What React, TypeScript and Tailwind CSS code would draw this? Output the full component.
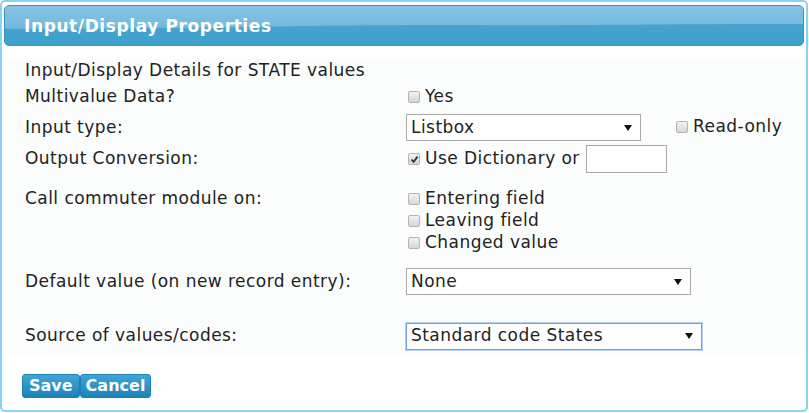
import React from "react";

const font = { fontFamily: '"DejaVu Sans", Verdana, sans-serif' };

function Box({ checked = false }: { checked?: boolean }) {
  return (
    <span className="inline-flex items-center justify-center w-[12px] h-[12px] mr-[5px] rounded-[2px] border border-[#b4b4b4] bg-gradient-to-b from-[#f2f2f2] to-[#d6d6d6] shrink-0">
      {checked && (
        <svg width="9" height="9" viewBox="0 0 9 9">
          <path d="M1.5 4.5 L3.6 6.8 L7.6 1.6" fill="none" stroke="#333" strokeWidth="1.8" />
        </svg>
      )}
    </span>
  );
}

function Check({ label, checked = false }: { label: string; checked?: boolean }) {
  return (
    <div className="flex items-center h-[22px] pl-[2px]">
      <Box checked={checked} />
      <span>{label}</span>
    </div>
  );
}

function Select({ value, w, focus = false }: { value: string; w: string; focus?: boolean }) {
  return (
    <div
      className={`flex items-center justify-between h-[27px] bg-white pl-[4px] pr-[8px] ${w} ${
        focus ? "border border-[#6f9fe6] shadow-[0_0_0_1px_#b6cff5]" : "border border-[#a9a9a9]"
      }`}
    >
      <span>{value}</span>
      <svg width="8" height="6" viewBox="0 0 8 6">
        <path d="M0 0 H8 L4 6 Z" fill="#111" />
      </svg>
    </div>
  );
}

export default function App() {
  return (
    <div className="w-[809px] h-[413px] bg-white" style={font}>
      <div className="w-[808px] h-[412px] border-2 border-[#86d5f6] rounded-[5px] flex flex-col px-[2px] pt-[3px]">
        <div className="relative h-[41px] rounded-[5px] border border-[#3b8fc1] overflow-hidden bg-[#44a3cd]">
          <svg className="absolute inset-0" width="100%" height="100%" viewBox="0 0 800 41" preserveAspectRatio="none">
            <defs>
              <linearGradient id="tp" x1="0" y1="0" x2="0" y2="1">
                <stop offset="0" stopColor="#86c4e2" />
                <stop offset="1" stopColor="#72b8dc" />
              </linearGradient>
              <linearGradient id="bt" x1="0" y1="0" x2="0" y2="1">
                <stop offset="0" stopColor="#4eaad3" />
                <stop offset="1" stopColor="#3c9fcb" />
              </linearGradient>
            </defs>
            <rect x="0" y="0" width="800" height="41" fill="url(#bt)" />
            <path d="M0 0 H800 V19 C650 19 560 21 470 20 C330 19 200 24 0 24 Z" fill="url(#tp)" />
          </svg>
          <div className="relative h-full flex items-center pl-[19px] pt-[3px] text-white font-bold text-[17px] tracking-[0.6px]">
            Input/Display Properties
          </div>
        </div>

        <div className="mt-[12px] bg-[#fbfcfc] text-[#222] text-[17px] tracking-[0.45px] pl-[21px] pb-[4px]">
          <div className="flex items-center h-[26px]">Input/Display Details for STATE values</div>
          <div className="flex items-center h-[26px]">
            <div className="w-[381px]">Multivalue Data?</div>
            <Check label="Yes" />
          </div>
          <div className="flex items-center h-[35px]">
            <div className="w-[381px]">Input type:</div>
            <Select value="Listbox" w="w-[235px]" />
            <div className="ml-[35px] flex items-center -mt-[2px]">
              <Box />
              <span>Read-only</span>
            </div>
          </div>
          <div className="flex items-center h-[28px]">
            <div className="w-[381px]">Output Conversion:</div>
            <div className="flex items-center pl-[2px]">
              <Box checked />
              <span>Use Dictionary or</span>
              <div className="ml-[6px] w-[81px] h-[28px] bg-white border border-[#a9a9a9]" />
            </div>
          </div>
          <div className="flex items-start mt-[15px]">
            <div className="w-[381px] h-[22px] flex items-center">Call commuter module on:</div>
            <div className="flex flex-col">
              <Check label="Entering field" />
              <Check label="Leaving field" />
              <Check label="Changed value" />
            </div>
          </div>
          <div className="flex items-center h-[29px] mt-[13px]">
            <div className="w-[381px]">Default value (on new record entry):</div>
            <Select value="None" w="w-[285px]" />
          </div>
          <div className="flex items-center h-[28px] mt-[26px]">
            <div className="w-[381px]">Source of values/codes:</div>
            <Select value="Standard code States" w="w-[296px]" focus />
          </div>
        </div>

        <div className="flex mt-[20px] pl-[18px]">
          <button className="h-[24px] px-[6px] rounded-[3px] border border-[#1d7fb4] bg-gradient-to-b from-[#3fa6d6] to-[#1b82b9] text-white font-bold text-[16px] leading-none">
            Save
          </button>
          <button className="h-[24px] px-[5px] rounded-[3px] border border-[#1d7fb4] bg-gradient-to-b from-[#3fa6d6] to-[#1b82b9] text-white font-bold text-[16px] leading-none">
            Cancel
          </button>
        </div>
      </div>
    </div>
  );
}
